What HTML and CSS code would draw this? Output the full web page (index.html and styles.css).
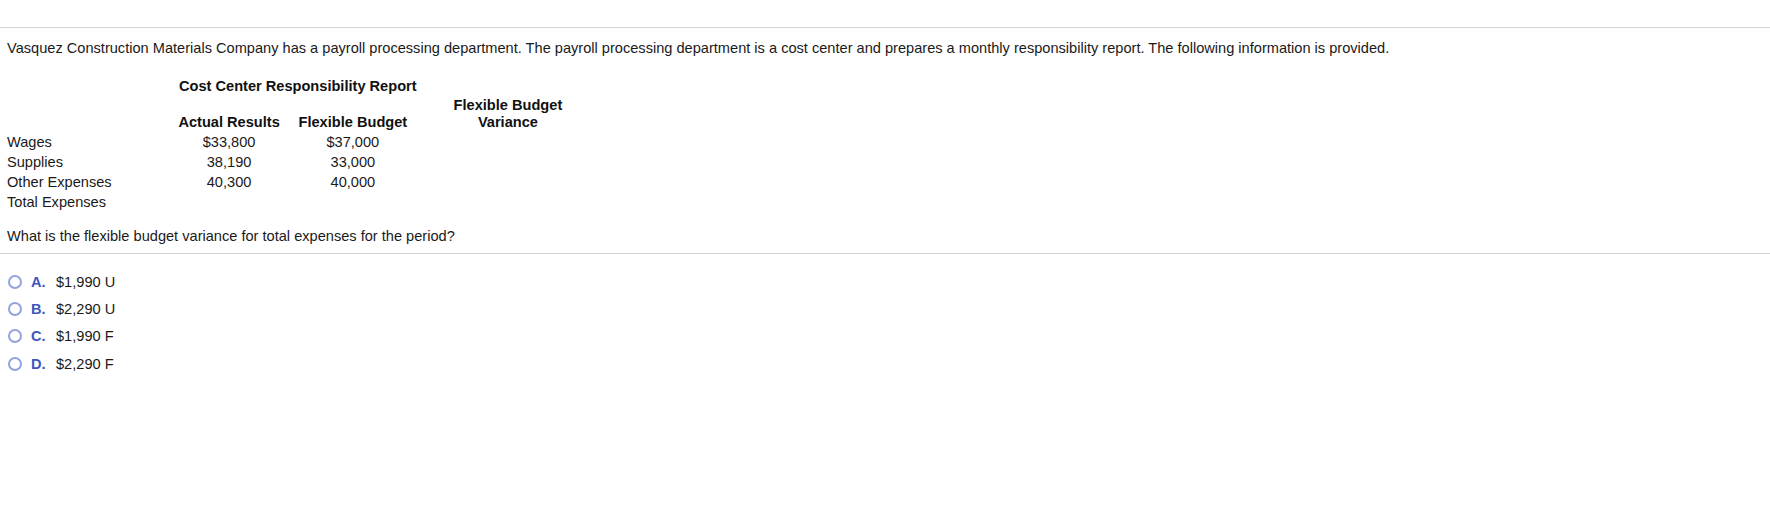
FILE: index.html
```html
<!DOCTYPE html>
<html>
<head>
<meta charset="utf-8">
<link rel="stylesheet" href="styles.css">
</head>
<body>
<div class="page">
  <div class="rule top-rule"></div>
  <p class="intro">Vasquez Construction Materials Company has a payroll processing department. The payroll processing department is a cost center and prepares a monthly responsibility report. The following information is provided.</p>
  <table class="report">
    <tr class="title-row">
      <td class="label"></td>
      <th colspan="2" class="title">Cost Center Responsibility Report</th>
      <td></td>
    </tr>
    <tr class="head-row">
      <td class="label"></td>
      <th class="col">Actual Results</th>
      <th class="col">Flexible Budget</th>
      <th class="col var">Flexible Budget<br>Variance</th>
    </tr>
    <tr><td class="label">Wages</td><td class="num">$33,800</td><td class="num">$37,000</td><td></td></tr>
    <tr><td class="label">Supplies</td><td class="num">38,190</td><td class="num">33,000</td><td></td></tr>
    <tr><td class="label">Other Expenses</td><td class="num">40,300</td><td class="num">40,000</td><td></td></tr>
    <tr><td class="label">Total Expenses</td><td class="num"></td><td class="num"></td><td></td></tr>
  </table>
  <p class="question">What is the flexible budget variance for total expenses for the period?</p>
  <div class="rule"></div>
  <ul class="options">
    <li class="option"><span class="radio"></span><span class="letter">A.</span><span class="answer">$1,990 U</span></li>
    <li class="option"><span class="radio"></span><span class="letter">B.</span><span class="answer">$2,290 U</span></li>
    <li class="option"><span class="radio"></span><span class="letter">C.</span><span class="answer">$1,990 F</span></li>
    <li class="option"><span class="radio"></span><span class="letter">D.</span><span class="answer">$2,290 F</span></li>
  </ul>
</div>
</body>
</html>
```

FILE: styles.css
```css
html, body {
  margin: 0;
  padding: 0;
  background: #fff;
}
body {
  font-family: "Liberation Sans", Arial, sans-serif;
  font-size: 14.6px;
  color: #1a1a1a;
}
.page {
  padding-top: 27px;
}
.rule {
  height: 1px;
  background: #d3d3de;
}
.intro {
  margin: 10px 0 0 7px;
  line-height: 20px;
}
.report {
  border-collapse: collapse;
  margin: 18px 0 0 7px;
}
.report td, .report th {
  padding: 0;
  font-size: 14.6px;
}
.report td.label {
  width: 162px;
  text-align: left;
}
.report th {
  font-weight: bold;
  text-align: center;
  color: #111;
}
.title-row th {
  line-height: 21px;
  padding-left: 10px;
}
.head-row th {
  vertical-align: bottom;
  line-height: 17px;
  padding: 0 9px 1px 9px;
}
.head-row th.var {
  padding-left: 37px;
}
.report td {
  line-height: 20px;
}
.report td.num {
  text-align: center;
}
.question {
  margin: 14px 0 0 7px;
  line-height: 20px;
  padding-bottom: 7px;
}
.options {
  list-style: none;
  margin: 14px 0 0 0;
  padding: 0;
}
.option {
  display: flex;
  align-items: center;
  height: 27.3px;
}
.radio {
  box-sizing: border-box;
  width: 14px;
  height: 14px;
  border: 2px solid #92a3de;
  border-radius: 50%;
  margin-left: 8px;
  margin-right: 9px;
}
.letter {
  color: #3d56bd;
  font-weight: bold;
  width: 25px;
}
.answer {
  color: #1a1a1a;
}
```
